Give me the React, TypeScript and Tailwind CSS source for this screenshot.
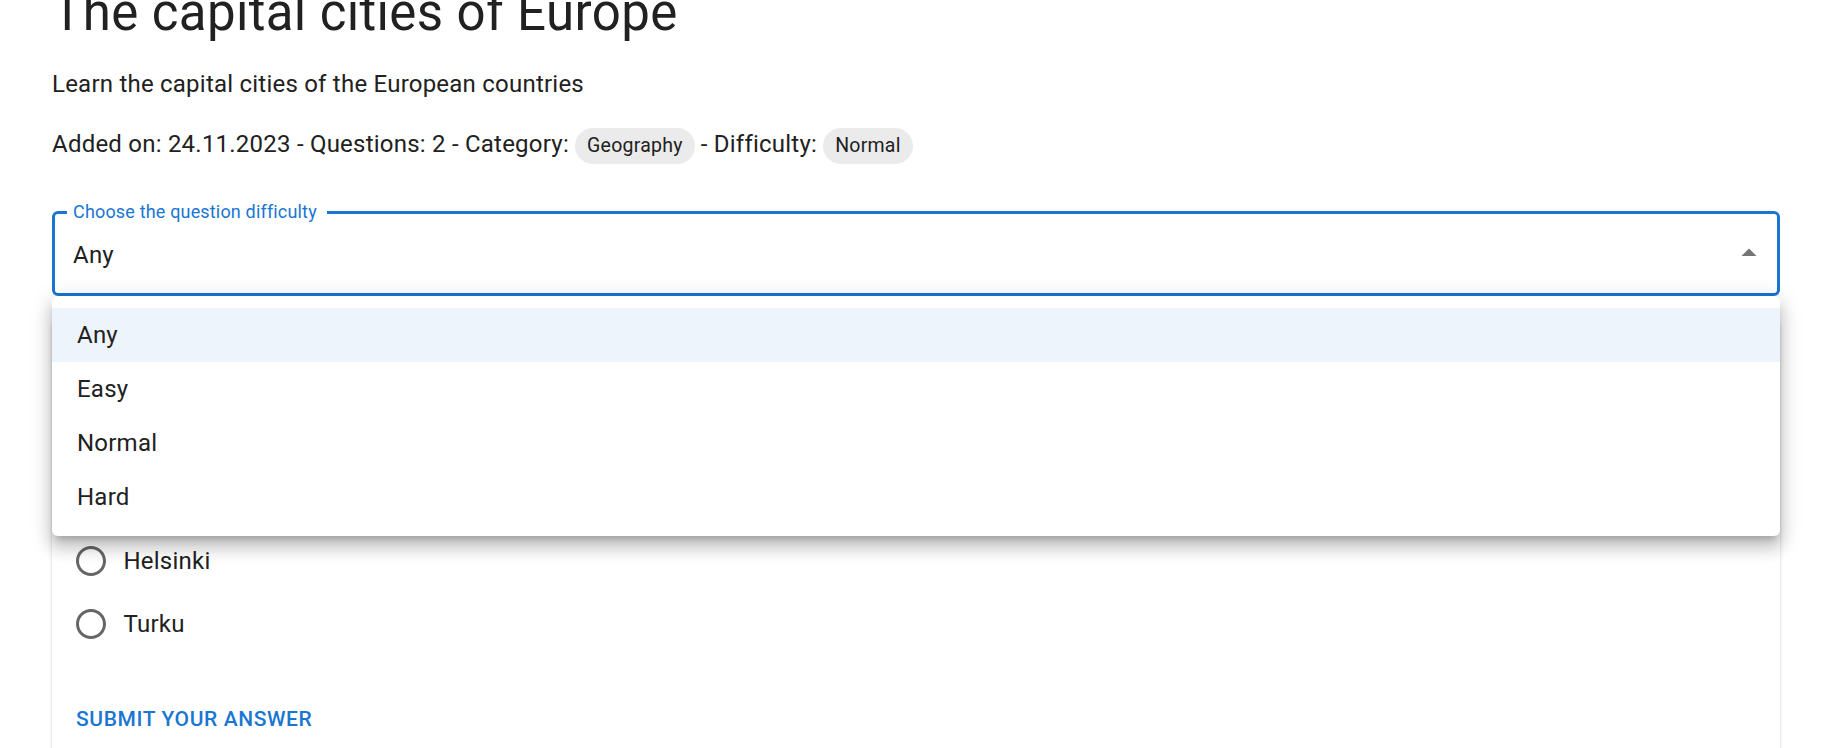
const OPTIONS = ["Any", "Easy", "Normal", "Hard"];
const ANSWERS = ["Espoo", "Tampere", "Helsinki", "Turku"];

function Chip({ label }: { label: string }) {
  return (
    <span className="inline-flex h-[36px] items-center rounded-full bg-[#ebebeb] px-[12px] text-[19.5px] leading-[29px] text-[#212121]">
      {label}
    </span>
  );
}

function RadioIcon() {
  return (
    <svg width="36" height="36" viewBox="0 0 24 24" fill="rgba(0,0,0,0.6)">
      <path d="M12 2C6.48 2 2 6.48 2 12s4.48 10 10 10 10-4.48 10-10S17.52 2 12 2zm0 18c-4.42 0-8-3.58-8-8s3.58-8 8-8 8 3.58 8 8-3.58 8-8 8z" />
    </svg>
  );
}

function DifficultySelect() {
  return (
    <div className="relative mt-[47px]">
      <div className="relative flex h-[85px] items-center rounded-[6px] border-[3px] border-[#1976d2] pl-[18px] pr-[10px] pt-[4px]">
        <span className="absolute left-[12px] top-[-13.5px] bg-white pl-[6px] pr-[10px] text-[18px] leading-[24px] tracking-[0.17px] text-[#1976d2]">
          Choose the question difficulty
        </span>
        <span className="flex-1 text-[24px] leading-[34.5px] tracking-[0.225px] text-[#212121]">Any</span>
        <svg width="36" height="36" viewBox="0 0 24 24" fill="rgba(0,0,0,0.54)" className="mt-[-4px] rotate-180">
          <path d="M7 10l5 5 5-5z" />
        </svg>
      </div>

      {/* open menu */}
      <div className="absolute left-0 right-0 top-full z-10 rounded-[6px] bg-white py-[12px] shadow-[0_7.5px_7.5px_-4.5px_rgba(0,0,0,0.2),0_12px_15px_1.5px_rgba(0,0,0,0.14),0_4.5px_21px_3px_rgba(0,0,0,0.12)]">
        {OPTIONS.map((opt, i) => (
          <div
            key={opt}
            className={
              "flex h-[54px] items-center pl-[25px] text-[24px] leading-[36px] tracking-[0.225px] text-[#212121] " +
              (i === 0 ? "bg-[#edf4fb]" : "")
            }
          >
            {opt}
          </div>
        ))}
      </div>
    </div>
  );
}

function QuestionCard() {
  return (
    <div className="mt-[25px] rounded-[6px] bg-white shadow-[0_3px_1.5px_-1.5px_rgba(0,0,0,0.2),0_1.5px_1.5px_0_rgba(0,0,0,0.14),0_1.5px_4.5px_0_rgba(0,0,0,0.12)]">
      <div className="px-[24px] pb-[24px] pt-[24px]">
        <h2 className="mb-[11px] text-[30px] font-medium leading-[48px] text-[#212121]">
          What is the capital of Finland?
        </h2>
        <div className="flex flex-col">
          {ANSWERS.map((a) => (
            <label key={a} className="ml-[-16.5px] flex h-[63px] items-center">
              <span className="flex h-[63px] w-[63px] items-center justify-center">
                <RadioIcon />
              </span>
              <span className="ml-[1px] text-[24px] leading-[36px] tracking-[0.225px] text-[#212121]">{a}</span>
            </label>
          ))}
        </div>
      </div>
      <div className="p-[12px]">
        <button className="px-[12px] py-[9px] text-[21px] font-medium uppercase leading-[36.75px] tracking-[0.6px] text-[#1976d2]">
          Submit your answer
        </button>
      </div>
    </div>
  );
}

export default function App() {
  return (
    <div className="h-[748px] w-full overflow-hidden bg-white font-['Roboto',sans-serif] text-[#212121]">
      <div className="ml-[52px] w-[1728px]">
        <h1 className="mb-[22px] mt-[-19px] text-[51px] font-normal leading-[63px] tracking-[0.375px]">
          The capital cities of Europe
        </h1>
        <p className="mb-[24px] text-[24px] leading-[36px] tracking-[0.225px]">
          Learn the capital cities of the European countries
        </p>
        <p className="text-[24px] leading-[36px] tracking-[0.225px]">
          Added on: 24.11.2023 - Questions: 2 - Category: <Chip label="Geography" /> - Difficulty:{" "}
          <Chip label="Normal" />
        </p>
        <DifficultySelect />
        <QuestionCard />
      </div>
    </div>
  );
}
